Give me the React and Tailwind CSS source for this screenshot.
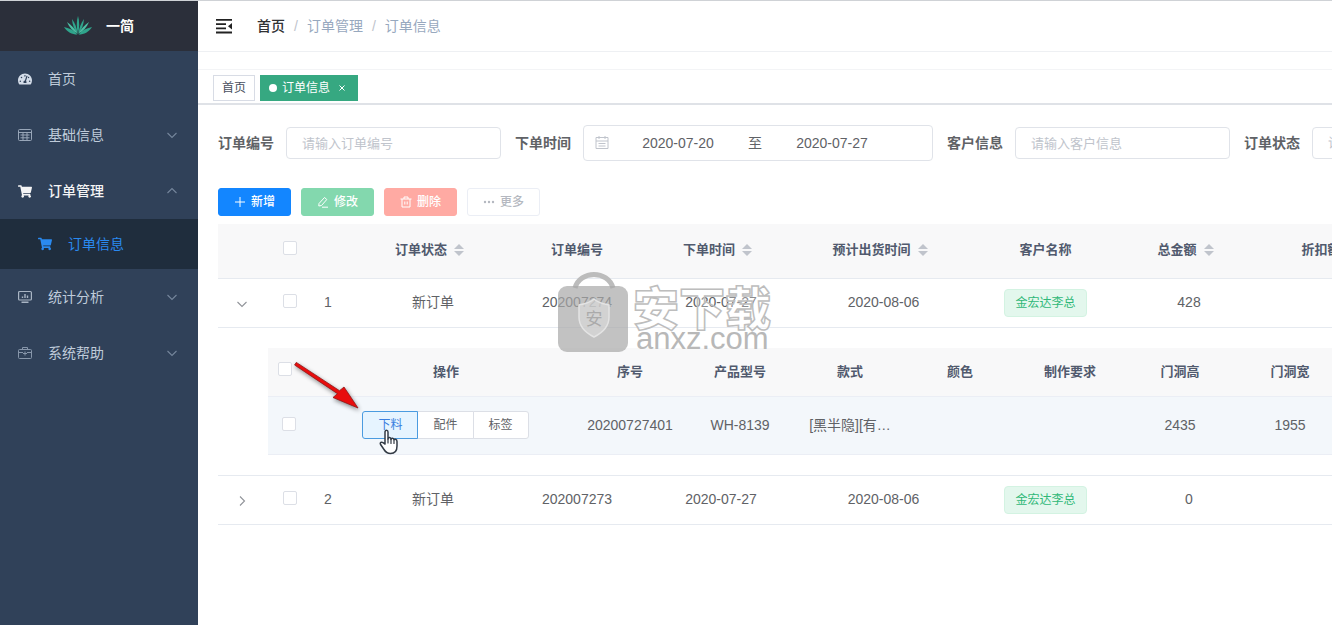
import React, { useState } from "react";
import { FaTachometerAlt, FaShoppingCart } from "react-icons/fa";

const menus = [
  { key: "home", title: "首页", icon: "dashboard" },
  { key: "base", title: "基础信息", icon: "form" },
  { key: "order", title: "订单管理", icon: "cart", children: ["订单信息"] },
  { key: "stat", title: "统计分析", icon: "monitor" },
  { key: "help", title: "系统帮助", icon: "kit" },
];

const orders = [
  { id: 1, status: "新订单", no: "202007274", date: "2020-07-27", ship: "2020-08-06", customer: "金宏达李总", total: 428 },
  { id: 2, status: "新订单", no: "202007273", date: "2020-07-27", ship: "2020-08-06", customer: "金宏达李总", total: 0 },
];

const detail = {
  no: "20200727401",
  model: "WH-8139",
  style: "[黑半隐][有…",
  color: "",
  require: "",
  height: 2435,
  width: 1955,
};

const columns = [
  { label: "订单状态", sortable: true },
  { label: "订单编号" },
  { label: "下单时间", sortable: true },
  { label: "预计出货时间", sortable: true },
  { label: "客户名称" },
  { label: "总金额", sortable: true },
  { label: "折扣额", sortable: true },
];

const detailColumns = ["操作", "序号", "产品型号", "款式", "颜色", "制作要求", "门洞高", "门洞宽"];

function Logo() {
  return (
    <svg width="28" height="20" viewBox="0 0 28 20" fill="#2fa58c">
      <path d="M14 0C15.600 5 15.600 12 14 18C12.400 12 12.400 5 14 0Z" />
      <path d="M8 3C11 7 13 12 13.600 18C10.400 14 8.400 9 8 3Z" />
      <path d="M20 3C17 7 15 12 14.400 18C17.600 14 19.600 9 20 3Z" />
      <path d="M0 11C6 12.500 10.500 14.500 13.400 18.500C8 18.500 3 16 0 11Z" />
      <path d="M28 11C22 12.500 17.500 14.500 14.600 18.500C20 18.500 25 16 28 11Z" />
      <path d="M3 6C7.500 9 11 13 13.500 17.600C9 15 5.200 11.500 3 6Z" fill="#4cc0a4" />
      <path d="M25 6C20.500 9 17 13 14.500 17.600C19 15 22.800 11.500 25 6Z" fill="#4cc0a4" />
    </svg>
  );
}

function MenuIcon({ name }) {
  if (name === "dashboard") return <FaTachometerAlt size={14} className="text-[#d3dce8]" />;
  if (name === "cart") return <FaShoppingCart size={15} />;
  if (name === "form") {
    return (
      <svg width="14" height="14" viewBox="0 0 14 14" fill="none" stroke="#98a6b8">
        <rect x="0.5" y="1.5" width="13" height="11" rx="1" />
        <path d="M0.5 4.5H13.5M2.500 7H11.500M2.500 9.800H11.500M5 4.500V12M9 4.500V12" />
      </svg>
    );
  }
  if (name === "monitor") {
    return (
      <svg width="14" height="14" viewBox="0 0 14 14" fill="none" stroke="#a9b5c4">
        <rect x="0.6" y="1.5" width="12.800" height="8.500" rx="1" strokeWidth="1.200" />
        <path d="M4.500 8V6.500M7 8V4M9.500 8V5.500M3.500 12.300H10.500" strokeWidth="1.400" />
      </svg>
    );
  }
  return (
    <svg width="14" height="14" viewBox="0 0 14 14" fill="none" stroke="#8796aa">
      <rect x="0.5" y="3.500" width="13" height="9" rx="1" />
      <path d="M4.500 3.500V1.500H9.500V3.500M0.500 6.500H5M9 6.500H13.500M7 5.500V9.500M5 7.500H9" />
    </svg>
  );
}

function Chevron({ dir = "down", className = "" }) {
  const paths = {
    down: "M1.5 4L6 8.500L10.500 4",
    up: "M1.5 8L6 3.500L10.500 8",
    right: "M4 1.500L8.500 6L4 10.500",
  };
  return (
    <svg width="12" height="12" viewBox="0 0 12 12" fill="none" stroke="currentColor" strokeWidth="1.1" className={className}>
      <path d={paths[dir]} />
    </svg>
  );
}

function SortCaret() {
  return (
    <span className="inline-flex w-6 justify-center align-middle">
      <svg width="10" height="14" viewBox="0 0 10 14" fill="#c0c4cc">
        <path d="M5 1L10 6H0Z" />
        <path d="M5 13L10 8H0Z" />
      </svg>
    </span>
  );
}

function Checkbox({ label }) {
  return (
    <input
      type="checkbox"
      aria-label={label}
      className="size-3.5 appearance-none rounded-xs border border-[#dcdfe6] bg-white align-middle checked:border-[#1890ff] checked:bg-[#1890ff]"
    />
  );
}

function Sidebar() {
  return (
    <aside className="w-[198px] shrink-0 bg-[#304159] text-sm text-[#bfcbd9]">
      <div className="flex h-[50px] items-center justify-center gap-3.5 bg-[#2b2f3a]">
        <Logo />
        <h1 className="font-bold text-white">一简</h1>
      </div>
      <nav>
        <ul>
          {menus.map((m) => (
            <li key={m.key}>
              <a href="#" className={`flex h-14 items-center gap-4 pl-4.5 pr-5 ${m.children ? "font-medium text-[#f4f4f5]" : ""}`}>
                <span className="flex w-3.5 justify-center">
                  <MenuIcon name={m.icon} />
                </span>
                <span className="flex-1">{m.title}</span>
                {m.key !== "home" && <Chevron dir={m.children ? "up" : "down"} className="text-[#75869c]" />}
              </a>
              {m.children?.map((c) => (
                <a key={c} href="#" className="flex h-[50px] items-center gap-4 bg-[#1f2d3d] pl-9.5 text-[#2a8af0]">
                  <FaShoppingCart size={14} />
                  <span>{c}</span>
                </a>
              ))}
            </li>
          ))}
        </ul>
      </nav>
    </aside>
  );
}

function Navbar() {
  return (
    <header className="flex h-[51px] items-center gap-6 border-b border-[#eef0f3] pl-[18px]">
      <button type="button" aria-label="菜单">
        <svg width="17" height="15" viewBox="0 0 17 15" fill="#222">
          <path d="M0 0H16V1.800H0ZM0 4.200H10V6H0ZM0 8.400H10V10.200H0ZM0 12.600H16V14.400H0ZM16 4V10.400L12 7.200Z" />
        </svg>
      </button>
      <nav className="flex items-center gap-[9px] text-sm text-[#97a8be]">
        <a href="#" className="font-medium text-[#303133]">首页</a>
        <span className="text-[#c0c4cc]">/</span>
        <span>订单管理</span>
        <span className="text-[#c0c4cc]">/</span>
        <span>订单信息</span>
      </nav>
    </header>
  );
}

function Tags() {
  return (
    <div className="mt-[17px] flex h-9 items-center gap-[5px] border-t border-b-2 border-t-[#f3f4f6] border-b-[#dfe2e7] pt-0.5 pl-[15px] text-xs">
      <a href="#" className="flex h-[26px] items-center border border-[#d8dce5] bg-white px-2 text-[#495060]">首页</a>
      <div className="flex h-[26px] items-center gap-[5px] bg-[#36a881] px-[9px] text-white">
        <span className="size-2 rounded-full bg-white" />
        <a href="#">订单信息</a>
        <button type="button" aria-label="关闭" className="flex w-3.5 justify-center">
          <svg width="6" height="6" viewBox="0 0 6 6" stroke="#fff" strokeWidth="1"><path d="M0.500 0.500L5.500 5.500M5.500 0.500L0.500 5.500" /></svg>
        </button>
      </div>
    </div>
  );
}

function Filters() {
  const [start, setStart] = useState("2020-07-20");
  const [end, setEnd] = useState("2020-07-27");
  const label = "shrink-0 font-bold";
  const input = "h-8 w-[215px] rounded border border-[#e0e3e9] px-[15px] text-[13px] placeholder-[#c0c4cc] outline-none";

  return (
    <form className="flex h-9 items-center gap-3.5 text-sm text-[#606266]">
      <div className="flex shrink-0 items-center gap-3">
        <label htmlFor="orderNo" className={label}>订单编号</label>
        <input id="orderNo" className={input} placeholder="请输入订单编号" />
      </div>
      <div className="flex shrink-0 items-center gap-3">
        <label htmlFor="startDate" className={label}>下单时间</label>
        <div className="flex h-9 w-[350px] items-center rounded border border-[#e0e3e9] px-2.5">
          <svg width="16" height="16" viewBox="0 0 16 16" fill="none" stroke="#c0c4cc" className="mr-1.5">
            <path d="M2 2.500H14V13.500H2ZM2 6H14M5 1V4M11 1V4M4.500 8.500H11.500M4.500 11H11.500" />
          </svg>
          <input id="startDate" value={start} onChange={(e) => setStart(e.target.value)} className="w-[124px] text-center outline-none" />
          <span className="w-[30px] text-center">至</span>
          <input aria-label="结束日期" value={end} onChange={(e) => setEnd(e.target.value)} className="w-[124px] text-center outline-none" />
        </div>
      </div>
      <div className="flex shrink-0 items-center gap-3">
        <label htmlFor="customer" className={label}>客户信息</label>
        <input id="customer" className={input} placeholder="请输入客户信息" />
      </div>
      <div className="flex shrink-0 items-center gap-3">
        <label htmlFor="status" className={label}>订单状态</label>
        <select id="status" className={`${input} appearance-none text-[#c0c4cc]`}>
          <option>请选择</option>
        </select>
      </div>
    </form>
  );
}

function Toolbar() {
  const btn = "flex h-7 items-center gap-[5px] rounded-[3px] border px-[15px] text-xs font-medium";
  const svg = { width: 12, height: 12, viewBox: "0 0 12 12", fill: "none", stroke: "currentColor" };
  return (
    <div className="mt-[27px] flex gap-2.5">
      <button type="button" className={`${btn} border-[#1386ff] bg-[#1386ff] text-white`}>
        <svg {...svg}><path d="M6 1V11M1 6H11" /></svg>
        新增
      </button>
      <button type="button" disabled className={`${btn} border-[#83d8ae] bg-[#83d8ae] text-white`}>
        <svg {...svg}><path d="M2 7.500L7.500 1.500L9.800 3.500L4.500 9.500L1.800 10ZM5 11.200H11" /></svg>
        修改
      </button>
      <button type="button" disabled className={`${btn} border-[#ffaaa3] bg-[#ffaaa3] text-white`}>
        <svg {...svg}><path d="M0.500 3H11.500M4 3V1H8V3M2 3V11H10V3M4.800 5.500V8.500M7.200 5.500V8.500" /></svg>
        删除
      </button>
      <button type="button" disabled className={`${btn} border-[#ebeef5] bg-white text-[#b4b8c0]`}>
        <svg {...svg} fill="currentColor" stroke="none">
          <circle cx="2" cy="6" r="1.2" /><circle cx="6" cy="6" r="1.2" /><circle cx="10" cy="6" r="1.2" />
        </svg>
        更多
      </button>
    </div>
  );
}

function HandCursor() {
  return (
    <svg width="20" height="26" viewBox="0 0 20 26" fill="#fff" stroke="#333b45" strokeWidth="1.500" strokeLinejoin="round" strokeLinecap="round" className="pointer-events-none absolute top-[18px] left-4 z-10">
      <path d="M6 15V3C6 0.600 9 0.600 9 3V10C9 8 12 8 12 10.500C12 8.700 15 8.900 15 11C15 9.700 18 10 18 12.500V17C18 22 15.500 24.500 11.500 24.500C8 24.500 6.500 23 5 20.500L1.600 15.500C0.600 13.700 2.600 12.500 4 13.700Z" />
      <path d="M9 10V14M12 10.500V14.500M15 11.500V14.500" fill="none" strokeWidth="1.200" />
    </svg>
  );
}

function DetailTable() {
  const td = "border-b border-[#ebeef5]";
  const btn = "-ml-px h-7 border px-[15px] text-xs";
  return (
    <table className="w-full table-fixed border-separate border-spacing-0 text-center">
      <colgroup>
        <col className="w-[49px]" />
        <col className="w-[258px]" />
        {detailColumns.slice(1).map((c) => (
          <col key={c} className="w-[110px]" />
        ))}
        <col />
      </colgroup>
      <thead className="bg-[#f8f8f9] text-[13px] text-[#515a6e]">
        <tr>
          <th className={`h-[49px] pb-1.5 pl-2.5 text-left ${td}`}><Checkbox label="全选明细" /></th>
          {detailColumns.map((c) => (
            <th key={c} className={td}>{c}</th>
          ))}
          <th className={td} />
        </tr>
      </thead>
      <tbody className="bg-[#f3f7fb]">
        <tr>
          <td className={`h-[58px] pb-1.5 pl-3.5 text-left ${td}`}><Checkbox label="选择明细" /></td>
          <td className={`pb-0.5 ${td}`}>
            <div className="flex justify-center">
              <div className="relative z-10">
                <button type="button" className={`${btn} rounded-l-[3px] border-[#4a9be0] bg-[#e6f4ff] text-[#3a7fe0]`}>下料</button>
                <HandCursor />
              </div>
              <button type="button" className={`${btn} border-[#dcdfe6] bg-white`}>配件</button>
              <button type="button" className={`${btn} rounded-r-[3px] border-[#dcdfe6] bg-white`}>标签</button>
            </div>
          </td>
          {Object.entries(detail).map(([k, v]) => (
            <td key={k} className={`pb-0.5 ${td}`}>{v}</td>
          ))}
          <td className={td} />
        </tr>
      </tbody>
    </table>
  );
}

function OrderTable() {
  const [expanded, setExpanded] = useState([1]);
  const td = "border-b border-[#e6eaf0]";
  const cell = `pb-0.5 ${td}`;

  const toggle = (id) => {
    setExpanded((prev) => (prev.includes(id) ? prev.filter((i) => i !== id) : [...prev, id]));
  };

  return (
    <table className="mt-2 w-full min-w-[1187px] table-fixed border-separate border-spacing-0 text-center text-sm text-[#606266]">
      <colgroup>
        <col className="w-12" />
        <col className="w-12" />
        <col className="w-[47px]" />
        <col className="w-36" />
        <col className="w-36" />
        <col className="w-36" />
        <col className="w-[181px]" />
        <col className="w-[143px]" />
        <col className="w-36" />
        <col className="w-36" />
      </colgroup>
      <thead className="bg-[#f8f8f9] text-[13px] text-[#515a6e]">
        <tr>
          <th className={`h-[55px] ${td}`} />
          <th className={`pb-1.5 ${td}`}><Checkbox label="全选" /></th>
          <th className={td} />
          {columns.map((c) => (
            <th key={c.label} className={`whitespace-nowrap ${cell}`}>
              <span className="align-middle">{c.label}</span>
              {c.sortable && <SortCaret />}
            </th>
          ))}
        </tr>
      </thead>
      <tbody>
        {orders.map((o) => (
          <React.Fragment key={o.id}>
            <tr>
              <td className={`h-[49px] ${td}`}>
                <button type="button" aria-label="展开" onClick={() => toggle(o.id)} className="align-middle text-[#909399]">
                  <Chevron dir={expanded.includes(o.id) ? "down" : "right"} />
                </button>
              </td>
              <td className={`pb-1.5 ${td}`}><Checkbox label={`选择 ${o.no}`} /></td>
              <td className={`pl-2.5 text-left ${cell}`}>{o.id}</td>
              <td className={cell}>{o.status}</td>
              <td className={cell}>{o.no}</td>
              <td className={cell}>{o.date}</td>
              <td className={cell}>{o.ship}</td>
              <td className={td}>
                <span className="inline-flex h-7 items-center rounded border border-[#d3f3e2] bg-[#e3f7ed] px-2.5 align-middle text-xs text-[#2fb878]">
                  {o.customer}
                </span>
              </td>
              <td className={cell}>{o.total}</td>
              <td className={td} />
            </tr>
            {expanded.includes(o.id) && (
              <tr>
                <td colSpan={10} className={`py-5 pl-[50px] ${td}`}>
                  <DetailTable />
                </td>
              </tr>
            )}
          </React.Fragment>
        ))}
      </tbody>
    </table>
  );
}

function Watermark() {
  return (
    <svg width="220" height="90" viewBox="0 0 220 90" className="pointer-events-none absolute top-[268px] left-[556px]">
      <path d="M19 19C24 1 52 1 57 19" fill="none" stroke="#bcbcbc" strokeWidth="5" />
      <rect x="2" y="17" width="70" height="66" rx="9" fill="#a8a8a8" fillOpacity="0.7" />
      <path d="M38 30C42 34 48 35 53 36V48C53 57 46 64 38 68C30 64 23 57 23 48V36C28 35 34 34 38 30Z" fill="#dcdcdc" fillOpacity="0.6" stroke="#e4e4e4" strokeWidth="1.500" />
      <text x="38" y="56" fontSize="17" textAnchor="middle" fill="#aaa">安</text>
      <text x="77" y="56" fontSize="46" fontWeight="900" fill="#fff" fillOpacity="0.3" stroke="#bdbdbd" strokeWidth="1.500">安下载</text>
      <text x="80" y="80" fontSize="31" fill="#b8b8b8">anxz.com</text>
    </svg>
  );
}

function Arrow() {
  return (
    <svg width="74" height="56" viewBox="0 0 74 56" className="pointer-events-none absolute top-[358px] left-[290px] drop-shadow-[1px_2px_2px_rgba(0,0,0,0.45)]">
      <path d="M6.300 3.400L49.500 31.700L54 28L68 49L43 38.500L47.500 34.700L4.600 6Z" fill="#e80d0d" stroke="#8f1414" strokeWidth="0.800" strokeLinejoin="round" />
    </svg>
  );
}

export default function App() {
  return (
    <div className="relative flex min-h-screen overflow-hidden border-t border-[#cfd2d6] bg-white font-['Liberation_Sans','Noto_Sans_CJK_SC',sans-serif]">
      <Sidebar />
      <div className="min-w-0 flex-1">
        <Navbar />
        <Tags />
        <main className="overflow-hidden pt-5 pl-5">
          <Filters />
          <Toolbar />
          <OrderTable />
        </main>
      </div>
      <Watermark />
      <Arrow />
    </div>
  );
}
